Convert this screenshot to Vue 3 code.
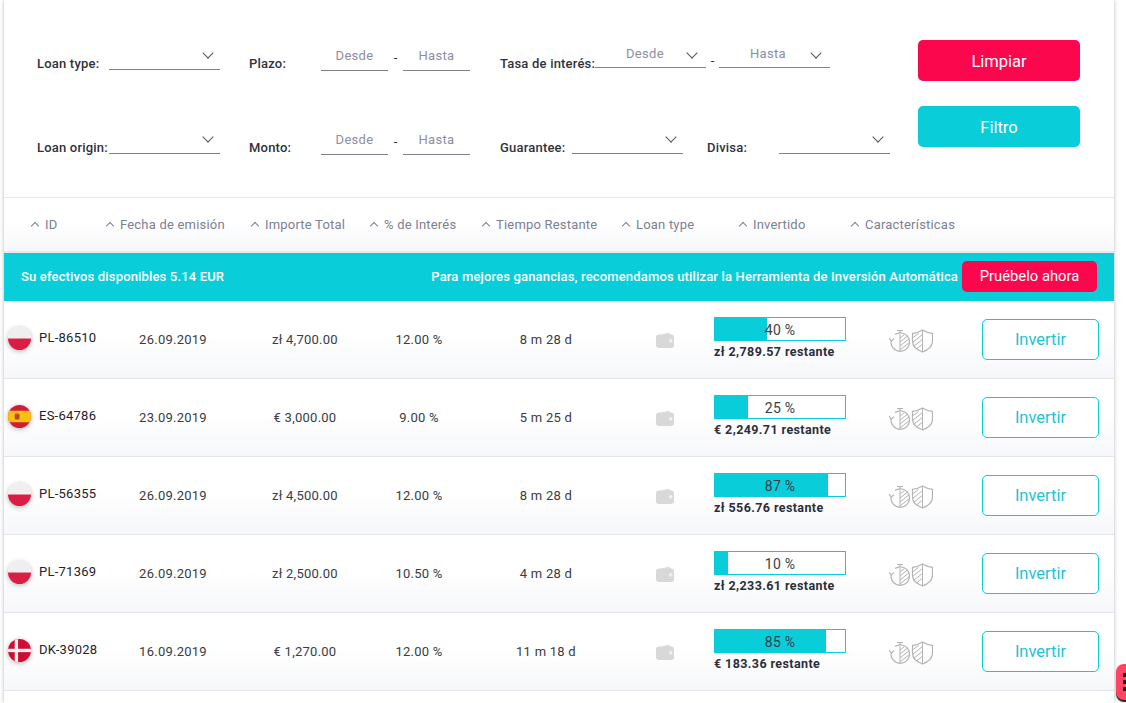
<script setup>
import { ref } from 'vue'

const headers = ['ID', 'Fecha de emisión', 'Importe Total', '% de Interés', 'Tiempo Restante', 'Loan type', 'Invertido', 'Características']

const loans = ref([
  { id: 'PL-86510', flag: 'pl', date: '26.09.2019', amount: 'zł 4,700.00', rate: '12.00 %', time: '8 m 28 d', pct: 40, left: 'zł 2,789.57 restante' },
  { id: 'ES-64786', flag: 'es', date: '23.09.2019', amount: '€ 3,000.00', rate: '9.00 %', time: '5 m 25 d', pct: 25, left: '€ 2,249.71 restante' },
  { id: 'PL-56355', flag: 'pl', date: '26.09.2019', amount: 'zł 4,500.00', rate: '12.00 %', time: '8 m 28 d', pct: 87, left: 'zł 556.76 restante' },
  { id: 'PL-71369', flag: 'pl', date: '26.09.2019', amount: 'zł 2,500.00', rate: '10.50 %', time: '4 m 28 d', pct: 10, left: 'zł 2,233.61 restante' },
  { id: 'DK-39028', flag: 'dk', date: '16.09.2019', amount: '€ 1,270.00', rate: '12.00 %', time: '11 m 18 d', pct: 85, left: '€ 183.36 restante' }
])
</script>

<template>
  <div class="card">
    <!-- filtros -->
    <section class="filters">
      <div class="filter-rows">
        <div class="row">
          <div class="field f1">
            <label>Loan type:</label>
            <div class="select w111"><i class="chev"></i></div>
          </div>
          <div class="field f2">
            <label>Plazo:</label>
            <input placeholder="Desde" />
            <span class="dash">-</span>
            <input placeholder="Hasta" />
          </div>
          <div class="field f3 raised">
            <label>Tasa de interés:</label>
            <div class="select w111 pick"><span>Desde</span><i class="chev"></i></div>
            <span class="dash">-</span>
            <div class="select w111 pick"><span>Hasta</span><i class="chev"></i></div>
          </div>
        </div>
        <div class="row">
          <div class="field f1">
            <label>Loan origin:</label>
            <div class="select w111"><i class="chev"></i></div>
          </div>
          <div class="field f2">
            <label>Monto:</label>
            <input placeholder="Desde" />
            <span class="dash">-</span>
            <input placeholder="Hasta" />
          </div>
          <div class="field f4">
            <label>Guarantee:</label>
            <div class="select w111"><i class="chev"></i></div>
          </div>
          <div class="field f5">
            <label>Divisa:</label>
            <div class="select w111"><i class="chev"></i></div>
          </div>
        </div>
      </div>
      <div class="filter-btns">
        <button class="btn red">Limpiar</button>
        <button class="btn teal">Filtro</button>
      </div>
    </section>

    <!-- cabecera tabla -->
    <div class="thead">
      <div v-for="h in headers" :key="h" class="th"><i class="up"></i>{{ h }}</div>
    </div>

    <!-- banner -->
    <div class="banner">
      <span class="cash">Su efectivos disponibles 5.14 EUR</span>
      <span class="promo">Para mejores ganancias, recomendamos utilizar la Herramienta de Inversión Automática</span>
      <button class="try">Pruébelo ahora</button>
    </div>

    <!-- filas -->
    <div v-for="l in loans" :key="l.id" class="loan">
      <div class="c-id">
        <span class="flag">
          <svg v-if="l.flag === 'pl'" viewBox="0 0 24 24" width="23" height="23">
            <rect width="24" height="12" fill="#efefef" />
            <rect y="12" width="24" height="12" fill="#d81e44" />
          </svg>
          <svg v-else-if="l.flag === 'es'" viewBox="0 0 24 24" width="23" height="23">
            <rect width="24" height="24" fill="#d01c3a" />
            <rect y="6" width="24" height="12" fill="#fbc00d" />
            <rect x="7" y="9" width="5" height="6" rx="1" fill="#b5472a" />
            <rect x="8" y="8" width="3" height="2" fill="#c8861e" />
          </svg>
          <svg v-else viewBox="0 0 24 24" width="23" height="23">
            <rect width="24" height="24" fill="#cf0d33" />
            <rect x="7" width="3.5" height="24" fill="#f4f4f4" />
            <rect y="10.2" width="24" height="3.5" fill="#f4f4f4" />
          </svg>
        </span>
        <span class="code">{{ l.id }}</span>
      </div>
      <div class="c-mid">{{ l.date }}</div>
      <div class="c-mid">{{ l.amount }}</div>
      <div class="c-mid">{{ l.rate }}</div>
      <div class="c-mid">{{ l.time }}</div>
      <div class="c-mid">
        <svg class="wallet" viewBox="0 0 18 16" width="18" height="16">
          <path d="M2.500 3.500 L11.500 .8 Q14.500 .2 14.800 3.500 Z" fill="#e0e0e0" />
          <rect y="2.500" width="18" height="13.500" rx="3" fill="#d8d8d8" />
          <rect x="13" y="7" width="3.500" height="3.500" rx="1.500" fill="#f0f0f0" />
        </svg>
      </div>
      <div class="c-prog">
        <div class="bar">
          <div class="fill" :style="{ width: l.pct + '%' }"></div>
          <span>{{ l.pct }} %</span>
        </div>
        <div class="left">{{ l.left }}</div>
      </div>
      <div class="c-icons">
        <svg viewBox="0 0 44 24" width="44" height="24" fill="none" stroke="#b4b4b4" stroke-width="1.2">
          <!-- reloj -->
          <path d="M8 1.500h6M11 1.500v2.500" />
          <path d="M6 5.500 A9.200 9.200 0 1 1 2.200 11.500" />
          <path d="M0 9 L2.200 12 L5 9.700" />
          <path d="M11 5v18M11 9l4.500-3.500M11 13l8-6.300M11 17l9.200-7.300M11 21l9.500-7.600" stroke-width="1" />
          <!-- escudo -->
          <path d="M33.500 1 C30 3.200 27 4 23.500 4.300 V12 C23.500 17 28 21 33.500 23 C39 21 43.500 17 43.500 12 V4.300 C40 4 37 3.200 33.500 1 Z" />
          <path d="M33.500 1V23M23.500 9l6-4.500M23.500 13.500l10-8M24.500 17.500l9-7.200M27.500 20l6-4.800" stroke-width="1" />
        </svg>
      </div>
      <div class="c-act"><button class="invest">Invertir</button></div>
    </div>

    <div class="tab"><i></i><i></i><i></i></div>
  </div>
</template>

<style scoped>
.card {
  position: relative;
  width: 1110px;
  min-height: 703px;
  margin-left: 4px;
  background: #fff;
  box-shadow: 0 0 4px rgba(0, 0, 0, 0.28);
  font-family: Roboto, "Liberation Sans", sans-serif;
  color: #2f3038;
  overflow: hidden;
}

/* ===== FILTROS ===== */
.filters {
  display: flex;
  height: 197px;
  border-bottom: 1px solid #e4e5e9;
  box-sizing: content-box;
}

.filter-rows {
  padding: 32px 0 0 33px;
  width: 881px;
  box-sizing: border-box;
}

.row {
  display: flex;
  height: 40px;
  margin-bottom: 44px;
}

.field {
  display: flex;
  align-items: flex-end;
  flex: none;
}

.field label {
  font-size: 13px;
  font-weight: 500;
  line-height: 16px;
  letter-spacing: 0.2px;
  color: #30323d;
  margin-bottom: 0;
  white-space: nowrap;
}

.f1 { width: 183px; margin-right: 29px; }
.f1 label { width: 72px; }
.f2 { width: 221px; margin-right: 30px; }
.f2 label { width: 72px; }
.f3 label { width: 95px; }
.f4 { width: 183px; margin-right: 24px; }
.f4 label { width: 72px; }
.f5 { width: 183px; }
.f5 label { width: 72px; }

.select {
  position: relative;
  display: flex;
  justify-content: flex-end;
  align-items: flex-start;
  height: 30px;
  margin-bottom: 2px;
  border-bottom: 1px solid #7d8091;
  box-sizing: border-box;
  padding: 9px 8px 0 0;
}

.w111 { width: 111px; }

.pick {
  justify-content: space-between;
  margin-bottom: 4px;
  padding-left: 31px;
  padding-top: 8px;
  padding-right: 10px;
}

.pick span {
  font-size: 13px;
  letter-spacing: 0.3px;
  line-height: 16px;
  color: #8c8fa1;
}

.pick .chev {
  margin-top: 3px;
}

.chev {
  display: block;
  width: 7px;
  height: 7px;
  border-right: 1.6px solid #54565f;
  border-bottom: 1.6px solid #54565f;
  transform: rotate(45deg);
}

input {
  width: 67px;
  height: 30px;
  margin-bottom: 1px;
  padding: 0 0 1px;
  border: none;
  border-bottom: 1px solid #7d8091;
  box-sizing: border-box;
  font-family: inherit;
  font-size: 13px;
  letter-spacing: 0.3px;
  text-align: center;
  outline: none;
  background: transparent;
}

input::placeholder {
  color: #8c8fa1;
  opacity: 1;
}

.dash {
  width: 15px;
  text-align: center;
  font-size: 13px;
  line-height: 16px;
  margin-bottom: 6px;
  color: #30323d;
}

.raised .dash {
  width: 13px;
  margin-bottom: 3px;
}

.filter-btns {
  display: flex;
  flex-direction: column;
  gap: 25px;
  padding: 40px 0 0 33px;
}

.btn {
  width: 162px;
  height: 41px;
  padding: 2px 0 0;
  border: none;
  border-radius: 5px;
  color: #fff;
  font-family: inherit;
  font-size: 16.5px;
  cursor: pointer;
}

.red { background: #fb074d; }
.teal { background: #09ceda; }

/* ===== CABECERA ===== */
.thead {
  display: grid;
  grid-template-columns: 75px 145px 119px 112px 140px 117px 112px 1fr;
  align-items: center;
  padding-left: 26px;
  padding-bottom: 1px;
  box-sizing: border-box;
  background: linear-gradient(#fff 45%, #f6f7fa);
  border-bottom: 2px solid #e6e8ed;
  height: 55px;
}

.th {
  display: flex;
  align-items: center;
  font-size: 13px;
  letter-spacing: 0.2px;
  color: #7d8091;
  white-space: nowrap;
}

.up {
  display: block;
  width: 5px;
  height: 5px;
  margin: 3px 7px 0 2px;
  border-left: 1px solid #7d8091;
  border-top: 1px solid #7d8091;
  transform: rotate(45deg);
}

/* ===== BANNER ===== */
.banner {
  display: flex;
  align-items: center;
  height: 48px;
  padding: 0 17px 2px;
  box-sizing: border-box;
  background: #09ceda;
  color: #fff;
  font-size: 13px;
  font-weight: 500;
  letter-spacing: 0.16px;
}

.promo {
  margin-left: auto;
  margin-right: 4px;
}

.try {
  width: 135px;
  height: 31px;
  border: none;
  border-radius: 5px;
  background: #fb074d;
  color: #fff;
  font-family: inherit;
  font-size: 14.8px;
  cursor: pointer;
}

/* ===== FILAS ===== */
.loan {
  display: grid;
  grid-template-columns: 106px 126px 138px 90px 164px 74px 168px 82px 162px;
  align-items: center;
  height: 78px;
  box-sizing: border-box;
  background: linear-gradient(#fff 45%, #f6f7fa);
  border-bottom: 1px solid #e3e5ea;
  font-size: 13px;
  letter-spacing: 0.25px;
}

.c-id {
  display: flex;
  align-items: center;
  padding-left: 4px;
}

.flag {
  width: 23px;
  height: 23px;
  margin-top: -3px;
  border-radius: 50%;
  overflow: hidden;
  box-shadow: 0 1px 5px rgba(0, 0, 0, 0.3);
}

.flag svg {
  display: block;
}

.code {
  margin-left: 8px;
  margin-top: -4px;
  color: #22232b;
}

.c-mid {
  text-align: center;
  color: #3a3b44;
}

.wallet {
  display: block;
  margin: 0 auto;
}

.c-prog {
  padding-left: 12px;
  margin-top: -3px;
}

.bar {
  position: relative;
  width: 132px;
  height: 24px;
  border: 1px solid #09ceda;
  box-sizing: border-box;
  text-align: center;
  line-height: 24px;
  font-size: 14px;
  color: #3a3c4a;
}

.fill {
  position: absolute;
  left: 0;
  top: 0;
  bottom: 0;
  background: #09ceda;
}

.bar span {
  position: relative;
}

.left {
  margin-top: 3px;
  font-size: 12.5px;
  font-weight: 700;
  line-height: 15px;
  letter-spacing: 0.4px;
  color: #2c2d3a;
  white-space: nowrap;
}

.c-icons {
  display: flex;
  justify-content: center;
  padding-top: 2px;
}

.c-icons svg {
  display: block;
}

.c-act {
  padding-left: 30px;
}

.invest {
  display: block;
  width: 117px;
  height: 41px;
  border: 1px solid #09ceda;
  border-radius: 5px;
  background: #fff;
  color: #1fc4d0;
  font-family: inherit;
  font-size: 16.5px;
  cursor: pointer;
}

.tab {
  position: fixed;
  left: 1116px;
  top: 664px;
  width: 12px;
  height: 36px;
  border-radius: 8px 0 0 8px;
  background: #ff4466;
  display: flex;
  flex-direction: column;
  justify-content: center;
  align-items: flex-end;
  gap: 3px;
  box-shadow: 0 2px 1px #222;
}

.tab i {
  display: block;
  width: 5px;
  height: 4px;
  background: #1b1b1b;
}
</style>

<style>
html, body {
  overflow: hidden;
  background: #fff;
}
</style>
